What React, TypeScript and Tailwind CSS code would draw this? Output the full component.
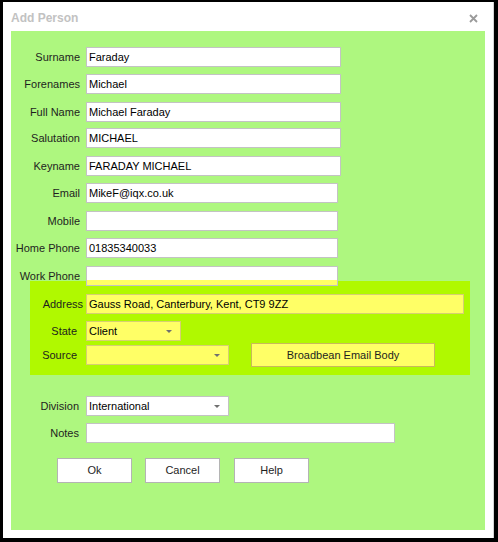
import React from "react";

type Field = { label: string; value: string; width: string; mt: string };

const topFields: Field[] = [
  { label: "Surname", value: "Faraday", width: "w-[255px]", mt: "mt-0" },
  { label: "Forenames", value: "Michael", width: "w-[255px]", mt: "mt-[7px]" },
  { label: "Full Name", value: "Michael Faraday", width: "w-[255px]", mt: "mt-[8px]" },
  { label: "Salutation", value: "MICHAEL", width: "w-[255px]", mt: "mt-[6px]" },
  { label: "Keyname", value: "FARADAY MICHAEL", width: "w-[255px]", mt: "mt-[8px]" },
  { label: "Email", value: "MikeF@iqx.co.uk", width: "w-[252px]", mt: "mt-[7px]" },
  { label: "Mobile", value: "", width: "w-[252px]", mt: "mt-[8px]" },
  { label: "Home Phone", value: "01835340033", width: "w-[252px]", mt: "mt-[7px]" },
];

function Label({ children, className = "w-[69px]" }: { children: React.ReactNode; className?: string }) {
  return (
    <span className={`shrink-0 whitespace-nowrap pt-[1px] text-right text-[#1e1e1e] ${className}`}>
      {children}
    </span>
  );
}

function TextBox({ value, className }: { value: string; className: string }) {
  return (
    <div className={`flex h-[20px] items-center border px-[2px] text-black ${className}`}>
      {value}
    </div>
  );
}

function Arrow() {
  return (
    <svg width="6" height="3" viewBox="0 0 6 3" className="shrink-0">
      <path d="M0 0h6L3 3z" fill="#707070" />
    </svg>
  );
}

function SelectBox({ value, className }: { value: string; className: string }) {
  return (
    <div
      className={`flex h-[20px] items-center justify-between border pl-[2px] pr-[8px] text-black ${className}`}
    >
      <span>{value}</span>
      <Arrow />
    </div>
  );
}

function Button({ children, className = "" }: { children: React.ReactNode; className?: string }) {
  return (
    <button
      className={`flex h-[25px] w-[75px] items-center justify-center border border-[#b4b4b4] bg-white text-[#1e1e1e] ${className}`}
    >
      {children}
    </button>
  );
}

export default function App() {
  return (
    <div
      className="h-[542px] w-[498px] bg-black pb-[4px] pl-[3px] pr-[4px] pt-[2px] text-[11px] leading-none"
      style={{ fontFamily: '"Liberation Sans", Arial, sans-serif' }}
    >
      <div className="flex h-full flex-col border-r border-[#d4d4d4] bg-white">
        {/* title bar */}
        <div className="flex h-[29px] shrink-0 items-center justify-between pl-[8px] pr-[15px] pt-[3px]">
          <span className="text-[12px] font-bold text-[#c2c2c2]">Add Person</span>
          <svg width="9" height="9" viewBox="0 0 9 9">
            <path d="M1 1l7 7M8 1L1 8" stroke="#9a9a9a" strokeWidth="1.8" />
          </svg>
        </div>

        <div className="mx-[8px] mb-[8px] flex flex-1 flex-col bg-[#aef77f] pt-[16px]">
          {topFields.map((f) => (
            <div key={f.label} className={`flex items-center gap-[6px] ${f.mt}`}>
              <Label>{f.label}</Label>
              <TextBox value={f.value} className={`${f.width} border-[#c3c3c3] bg-white`} />
            </div>
          ))}

          <div className="relative z-10 mt-[8px] flex items-center gap-[6px]">
            <Label>Work Phone</Label>
            <TextBox
              value=""
              className="w-[252px] border-[#c3c3c3] bg-[linear-gradient(to_bottom,#ffffff_13px,#ffff66_13px)]"
            />
          </div>

          {/* highlighted address block */}
          <div className="-mt-[5px] ml-[19px] mr-[15px] flex flex-col bg-[#b0f900] pb-[8px] pt-[13px]">
            <div className="-ml-[19px] flex items-center gap-[6px]">
              <Label className="w-[72px]">Address</Label>
              <TextBox
                value="Gauss Road, Canterbury, Kent, CT9 9ZZ"
                className="-ml-[3px] w-[378px] border-[#d6cf72] bg-[#ffff66]"
              />
            </div>
            <div className="-ml-[19px] mt-[7px] flex items-center gap-[6px]">
              <Label className="w-[69px] pr-[3px]">State</Label>
              <SelectBox value="Client" className="w-[95px] border-[#d6cf72] bg-[#ffff66]" />
            </div>
            <div className="-ml-[19px] mt-[2px] flex h-[24px] items-center gap-[6px]">
              <Label className="w-[69px] pr-[3px]">Source</Label>
              <SelectBox value="" className="w-[143px] border-[#d6cf72] bg-[#ffff66]" />
              <button className="ml-[16px] flex h-[24px] w-[184px] items-center justify-center border border-[#c9b95a] bg-[#ffff66] text-[#1e1e1e]">
                Broadbean Email Body
              </button>
            </div>
          </div>

          <div className="mt-[21px] flex items-center gap-[6px]">
            <Label className="w-[69px] pr-[1px]">Division</Label>
            <SelectBox value="International" className="w-[143px] border-[#c3c3c3] bg-white" />
          </div>
          <div className="mt-[7px] flex items-center gap-[6px]">
            <Label className="w-[69px] pr-[1px]">Notes</Label>
            <TextBox value="" className="w-[309px] border-[#c3c3c3] bg-white" />
          </div>

          <div className="ml-[46px] mt-[15px] flex">
            <Button>Ok</Button>
            <Button className="ml-[13px]">Cancel</Button>
            <Button className="ml-[14px]">Help</Button>
          </div>
        </div>
      </div>
    </div>
  );
}
